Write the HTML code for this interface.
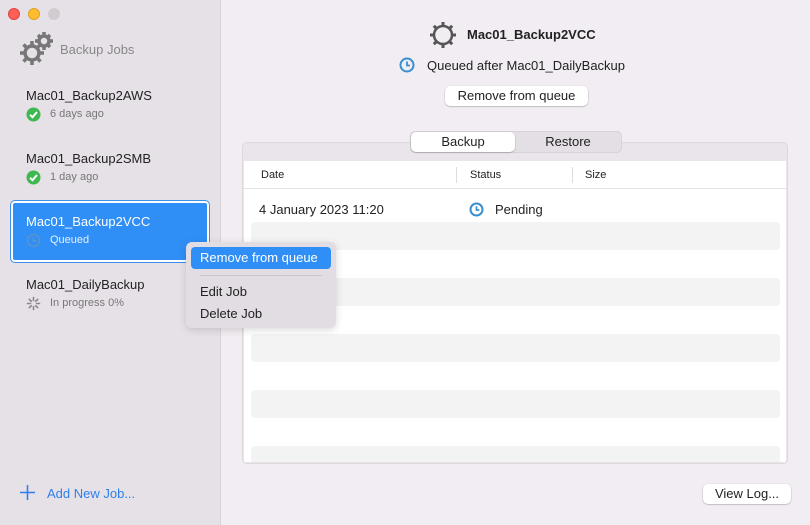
<!DOCTYPE html>
<html><head><style>
*{margin:0;padding:0;box-sizing:border-box}
body{width:810px;height:525px;overflow:hidden;font-family:"Liberation Sans",sans-serif;background:#f1edf2;position:relative;font-size:13px;color:#222}
.abs{position:absolute}
.side{left:0;top:0;width:221px;height:525px;background:#e6e1e7;border-right:1px solid #d8d3d8}
.dot{width:12px;height:12px;border-radius:50%;top:8px}
.name{font-size:13px;color:#222;left:26px}
.sub{font-size:11px;color:#777;left:50px}
.btn{background:#fff;border-radius:5px;box-shadow:0 0.5px 1.5px rgba(0,0,0,.35);font-size:13px;text-align:center;color:#222}
.stripe{left:251px;width:529px;height:28px;background:#f3f3f3;border-radius:4px}
</style></head><body>
<div class="abs side"></div>
<div class="abs dot" style="left:8px;background:#fe5f57;border:0.5px solid #e0443e"></div>
<div class="abs dot" style="left:28px;background:#febc2e;border:0.5px solid #dea123"></div>
<div class="abs dot" style="left:48px;background:#d0ccd0"></div>
<svg class="abs" style="left:18px;top:30px" width="36" height="36" viewBox="0 0 36 36">
<g fill="none" stroke="#777" stroke-width="3.5"><circle cx="14" cy="23" r="7"/><circle cx="26" cy="11" r="5"/></g>
<g stroke="#777" stroke-width="3.5">
<path d="M14 11v4M14 31v4M2 23h4M22 23h4M5.5 14.5l3 3M19.5 28.5l3 3M5.5 31.5l3-3M22.5 14.5l-3 3"/>
<path d="M26 2v3M26 17v3M17 11h3M32 11h3M20 5l2 2M30 15l2 2M32 5l-2 2"/></g></svg>
<div class="abs" style="left:60px;top:42px;font-size:13px;color:#888">Backup Jobs</div>

<div class="abs name" style="top:88px">Mac01_Backup2AWS</div>
<svg class="abs" style="left:26px;top:107px" width="15" height="15"><circle cx="7.5" cy="7.5" r="7" fill="#3fb84f"/><path d="M4 7.8l2.5 2.4L11 5" stroke="#fff" stroke-width="2" fill="none"/></svg>
<div class="abs sub" style="top:108px">6 days ago</div>
<div class="abs name" style="top:151px">Mac01_Backup2SMB</div>
<svg class="abs" style="left:26px;top:170px" width="15" height="15"><circle cx="7.5" cy="7.5" r="7" fill="#3fb84f"/><path d="M4 7.8l2.5 2.4L11 5" stroke="#fff" stroke-width="2" fill="none"/></svg>
<div class="abs sub" style="top:171px">1 day ago</div>

<div class="abs" style="left:11px;top:201px;width:198px;height:61px;background:#2f8ff7;border:2px solid #fff;outline:1px solid #3b8ff0;border-radius:4px"></div>
<div class="abs name" style="top:214px;color:#fff">Mac01_Backup2VCC</div>
<svg class="abs" style="left:26px;top:233px" width="15" height="15"><circle cx="7.5" cy="7.5" r="6" fill="none" stroke="#5a94c8" stroke-width="1.5"/><path d="M7.5 4v4h3" stroke="#5a94c8" stroke-width="1.5" fill="none"/></svg>
<div class="abs sub" style="top:234px;color:#e8f0ff">Queued</div>

<div class="abs name" style="top:277px">Mac01_DailyBackup</div>
<svg class="abs" style="left:26px;top:296px" width="15" height="15" stroke-width="1.6" stroke-linecap="round"><g stroke="#888"><path d="M7.5 1.5v3M7.5 10.5v3M1.5 7.5h3M10.5 7.5h3M3.3 3.3l2 2M9.7 9.7l2 2M3.3 11.7l2-2M11.7 3.3l-2 2"/></g></svg>
<div class="abs sub" style="top:297px">In progress 0%</div>

<svg class="abs" style="left:19px;top:484px" width="17" height="17"><path d="M8.5 1v15M1 8.5h15" stroke="#2f80ed" stroke-width="1.6"/></svg>
<div class="abs" style="left:47px;top:486px;font-size:13px;color:#2f80ed">Add New Job...</div>

<svg class="abs" style="left:428px;top:20px" width="30" height="30" viewBox="0 0 30 30"><circle cx="15" cy="15" r="9" fill="none" stroke="#555" stroke-width="2.5"/><g stroke="#555" stroke-width="3"><path d="M15 2v4M15 24v4M2 15h4M24 15h4M5.8 5.8l2.8 2.8M21.4 21.4l2.8 2.8M5.8 24.2l2.8-2.8M24.2 5.8l-2.8 2.8"/></g></svg>
<div class="abs" style="left:467px;top:27px;font-size:13px;font-weight:bold;color:#222">Mac01_Backup2VCC</div>
<svg class="abs" style="left:399px;top:57px" width="16" height="16"><circle cx="8" cy="8" r="6.5" fill="none" stroke="#3a8fd0" stroke-width="2"/><path d="M8 4.5v4h3" stroke="#3a8fd0" stroke-width="1.8" fill="none"/></svg>
<div class="abs" style="left:427px;top:58px;font-size:13px">Queued after Mac01_DailyBackup</div>
<div class="abs btn" style="left:445px;top:86px;width:143px;height:20px;line-height:20px">Remove from queue</div>

<div class="abs" style="left:242px;top:142px;width:546px;height:322px;background:#e9e5ea;border:1px solid #dcd8dc;border-radius:5px"></div>
<div class="abs" style="left:244px;top:161px;width:542px;height:301px;background:#fff"></div>
<div class="abs" style="left:410px;top:131px;width:212px;height:22px;background:#e3dfe4;border-radius:5px;border:0.5px solid #d6d2d6"></div>
<div class="abs btn" style="left:411px;top:132px;width:104px;height:20px;line-height:20px">Backup</div>
<div class="abs" style="left:516px;top:134px;width:104px;text-align:center">Restore</div>
<div class="abs" style="left:261px;top:169px;font-size:11px">Date</div>
<div class="abs" style="left:456px;top:167px;width:1px;height:16px;background:#ddd"></div>
<div class="abs" style="left:470px;top:169px;font-size:11px">Status</div>
<div class="abs" style="left:572px;top:167px;width:1px;height:16px;background:#ddd"></div>
<div class="abs" style="left:585px;top:169px;font-size:11px">Size</div>
<div class="abs" style="left:244px;top:188px;width:542px;height:1px;background:#e4e4e4"></div>
<div class="abs" style="left:259px;top:202px">4 January 2023 11:20</div>
<svg class="abs" style="left:469px;top:202px" width="15" height="15"><circle cx="7.5" cy="7.5" r="6" fill="none" stroke="#3a8fd0" stroke-width="2"/><path d="M7.5 4.2v3.8h2.8" stroke="#3a8fd0" stroke-width="1.7" fill="none"/></svg>
<div class="abs" style="left:495px;top:202px">Pending</div>
<div class="abs stripe" style="top:222px"></div>
<div class="abs stripe" style="top:278px"></div>
<div class="abs stripe" style="top:334px"></div>
<div class="abs stripe" style="top:390px"></div>
<div class="abs stripe" style="top:446px;height:16px;border-radius:4px 4px 0 0"></div>

<div class="abs btn" style="left:703px;top:484px;width:88px;height:20px;line-height:20px">View Log...</div>

<div class="abs" style="left:186px;top:242px;width:150px;height:86px;background:#e2dce3;border-radius:6px;box-shadow:0 2px 8px rgba(0,0,0,.15)"></div>
<div class="abs" style="left:191px;top:247px;width:140px;height:22px;background:#2f8ff7;border-radius:4px;color:#fff;line-height:22px;padding-left:9px">Remove from queue</div>
<div class="abs" style="left:200px;top:275px;width:122px;height:1px;background:#cbc6cc"></div>
<div class="abs" style="left:200px;top:284px">Edit Job</div>
<div class="abs" style="left:200px;top:306px">Delete Job</div>
</body></html>
